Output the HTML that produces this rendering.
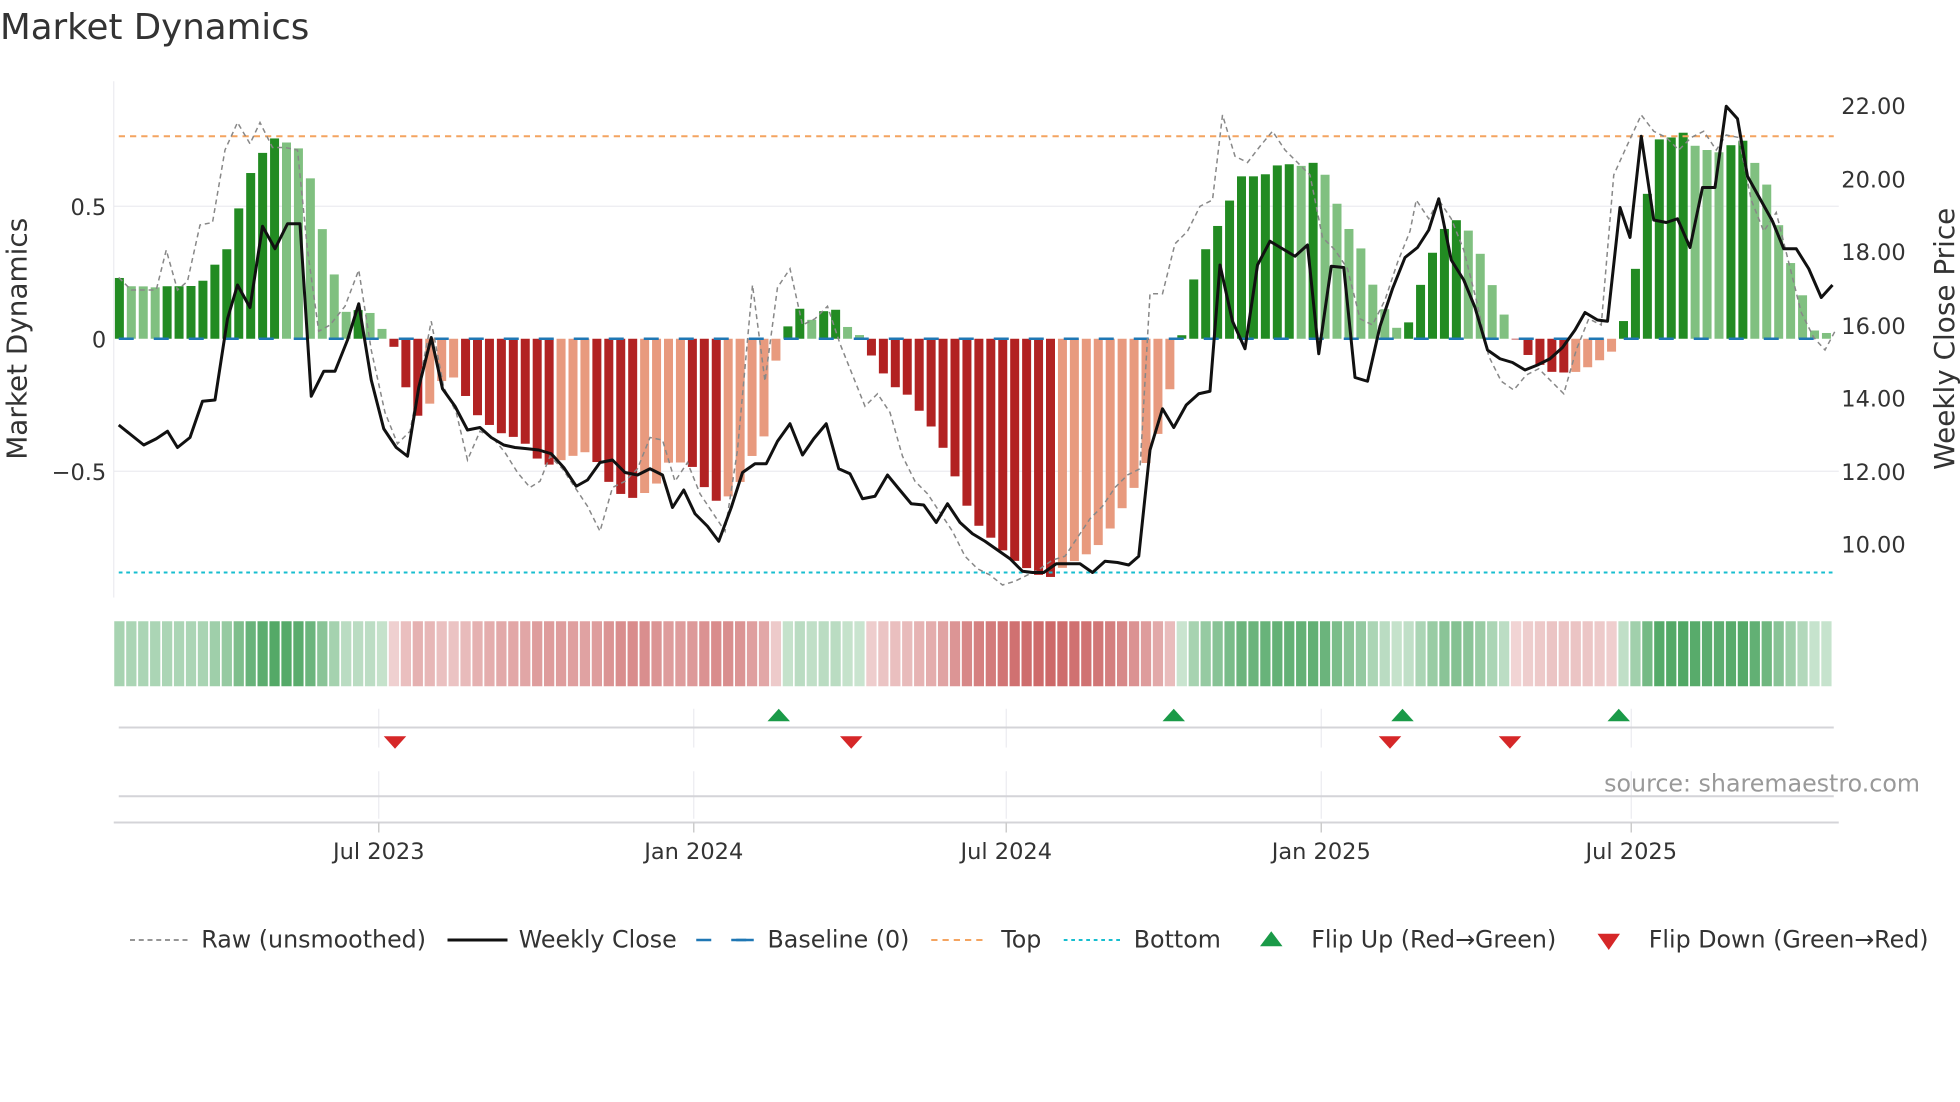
<!DOCTYPE html>
<html><head><meta charset="utf-8"><style>
html,body{margin:0;padding:0;background:#fff;}
svg{display:block;font-family:"DejaVu Sans","Liberation Sans",sans-serif;}
</style></head><body>
<svg id="s" width="1960" height="1102" viewBox="0 0 1568 881.6" xmlns="http://www.w3.org/2000/svg">
<rect width="1568" height="882" fill="#fff"/>
<text x="0" y="31" font-size="28.5" fill="#333">Market Dynamics</text>
<g stroke="#ebebf0" stroke-width="1">
<line x1="91" y1="165" x2="1471" y2="165"/><line x1="91" y1="377" x2="1471" y2="377"/>
<line x1="91" y1="65" x2="91" y2="478"/>
</g>
<g id="bars"></g>
<g id="heat"></g>
<line x1="95" y1="271" x2="1467" y2="271" stroke="#1f77b4" stroke-width="2" stroke-dasharray="12,16"/>
<line x1="95" y1="109" x2="1467" y2="109" stroke="#f4a460" stroke-width="1.6" stroke-dasharray="5,4"/>
<line x1="95" y1="458" x2="1467" y2="458" stroke="#17becf" stroke-width="1.6" stroke-dasharray="3,3"/>
<polyline id="raw" fill="none" stroke="#888" stroke-width="1.2" stroke-dasharray="4,3"/>
<polyline id="close" fill="none" stroke="#111" stroke-width="2.4" stroke-linejoin="round"/>
<g font-size="18" fill="#333">
<text x="85" y="172" text-anchor="end">0.5</text>
<text x="85" y="278" text-anchor="end">0</text>
<text x="85" y="384" text-anchor="end">−0.5</text>
<text x="1473" y="91">22.00</text><text x="1473" y="150">20.00</text><text x="1473" y="208">18.00</text>
<text x="1473" y="267">16.00</text><text x="1473" y="325">14.00</text><text x="1473" y="384">12.00</text><text x="1473" y="442">10.00</text>
</g>
<text transform="translate(21,271) rotate(-90)" font-size="22.3" fill="#333" text-anchor="middle">Market Dynamics</text>
<text transform="translate(1563,271) rotate(-90)" font-size="22.3" fill="#333" text-anchor="middle">Weekly Close Price</text>
<g stroke="#ebebf0" stroke-width="1">
<line x1="303" y1="567" x2="303" y2="598"/><line x1="555" y1="567" x2="555" y2="598"/><line x1="805" y1="567" x2="805" y2="598"/><line x1="1057" y1="567" x2="1057" y2="598"/><line x1="1305" y1="567" x2="1305" y2="598"/>
<line x1="303" y1="617" x2="303" y2="655"/><line x1="555" y1="617" x2="555" y2="655"/><line x1="805" y1="617" x2="805" y2="655"/><line x1="1057" y1="617" x2="1057" y2="655"/><line x1="1305" y1="617" x2="1305" y2="655"/>
</g>
<line x1="95" y1="582" x2="1467" y2="582" stroke="#d4d4d8" stroke-width="1.6"/>
<line x1="95" y1="637" x2="1467" y2="637" stroke="#d4d4d8" stroke-width="1.6"/>
<line x1="91" y1="658" x2="1471" y2="658" stroke="#d4d4d8" stroke-width="1.6"/>
<g stroke="#ccc" stroke-width="1.2"><line x1="303" y1="658" x2="303" y2="666"/><line x1="555" y1="658" x2="555" y2="666"/><line x1="805" y1="658" x2="805" y2="666"/><line x1="1057" y1="658" x2="1057" y2="666"/><line x1="1305" y1="658" x2="1305" y2="666"/></g>
<g font-size="18" fill="#333" text-anchor="middle">
<text x="303" y="687">Jul 2023</text><text x="555" y="687">Jan 2024</text><text x="805" y="687">Jul 2024</text><text x="1057" y="687">Jan 2025</text><text x="1305" y="687">Jul 2025</text>
</g>
<g fill="#1a9a48">
<polygon points="614,577 632,577 623,567"/><polygon points="930,577 948,577 939,567"/><polygon points="1113,577 1131,577 1122,567"/><polygon points="1286,577 1304,577 1295,567"/>
</g>
<g fill="#d62728">
<polygon points="307,589 325,589 316,599"/><polygon points="672,589 690,589 681,599"/><polygon points="1103,589 1121,589 1112,599"/><polygon points="1199,589 1217,589 1208,599"/>
</g>
<text x="1536" y="633" font-size="19" fill="#999" text-anchor="end">source: sharemaestro.com</text>
<g font-size="19" fill="#333">
<line x1="104" y1="752" x2="150" y2="752" stroke="#888" stroke-width="1.4" stroke-dasharray="4,3"/><text x="161" y="758">Raw (unsmoothed)</text>
<line x1="358" y1="752" x2="406" y2="752" stroke="#111" stroke-width="2.4"/><text x="415" y="758">Weekly Close</text>
<line x1="557" y1="752" x2="603" y2="752" stroke="#1f77b4" stroke-width="2" stroke-dasharray="12,16"/><line x1="589" y1="752" x2="603" y2="752" stroke="#1f77b4" stroke-width="2"/><text x="614" y="758">Baseline (0)</text>
<line x1="745" y1="752" x2="790" y2="752" stroke="#f4a460" stroke-width="1.6" stroke-dasharray="5,4"/><text x="801" y="758">Top</text>
<line x1="851" y1="752" x2="896" y2="752" stroke="#17becf" stroke-width="1.6" stroke-dasharray="3,3"/><text x="907" y="758">Bottom</text>
<polygon points="1008,757 1026,757 1017,745" fill="#1a9a48"/><text x="1049" y="758">Flip Up (Red→Green)</text>
<polygon points="1278,747 1296,747 1287,760" fill="#d62728"/><text x="1319" y="758">Flip Down (Green→Red)</text>
</g>
</svg>
<script>
var NS="http://www.w3.org/2000/svg";
var by=[222,229,229,230,229,229,229,228,213,208,177,143,129,110,112,117,121,169,199,240,258,240,258,269,292,329,335,318,302,302,316,331,338,345,349,350,358,370,372,368,365,361,365,380,393,397,399,393,386,370,370,370,386,397,405,391,383,360,348,280,258,245,258,247,248,265,269,288,300,310,315,327,338,352,372,395,415,425,433,443,450,455,460,462,455,450,445,440,430,415,400,385,365,343,303,258,213,195,176,155,136,143,138,130,132,133,129,145,172,189,204,241,251,269,251,213,195,175,177,190,213,240,262,281,287,297,298,298,297,290,286,275,232,197,120,106,112,104,120,120,122,116,112,129,143,173,206,222,264,265,268];
var n=by.length;
var anc=[[0,95],[22,300],[23,312],[58,612],[59,622],[65,680],[66,690],[93,928],[94,938],[121,1198],[122,1208],[130,1285],[131,1295],[n-1,1466]];
var kx=[];
for(var i=0;i<n;i++){for(var j=1;j<anc.length;j++){if(i<=anc[j][0]){var a=anc[j-1],b=anc[j];kx.push(a[1]+(i-a[0])*(b[1]-a[1])/(b[0]-a[0]));break;}}}
function interp(x){if(x<=kx[0])return by[0];for(var i=1;i<n;i++){if(x<=kx[i]){var t=(x-kx[i-1])/(kx[i]-kx[i-1]);return by[i-1]+t*(by[i]-by[i-1]);}}return by[n-1];}
var g=document.getElementById("bars"),h=document.getElementById("heat");
var N=144,prev=null;
for(var i=0;i<N;i++){var cx=95.5+i*9.55;var y=interp(cx);var v=(271-y)/212;
 var c;if(v>=0){c=(prev===null||v>=prev)?"#228b22":"#80c080";}else{c=(prev===null||v<=prev)?"#b22222":"#e89a7e";}
 prev=v;
 var r=document.createElementNS(NS,"rect");r.setAttribute("x",cx-3.6);r.setAttribute("width",7.2);
 r.setAttribute("y",Math.min(y,271));r.setAttribute("height",Math.max(Math.abs(271-y),0.5));r.setAttribute("fill",c);g.appendChild(r);
 var q=document.createElementNS(NS,"rect");q.setAttribute("x",cx-4.1);q.setAttribute("width",8.2);q.setAttribute("y",497);q.setAttribute("height",52);
 var a;if(v>=0){a=0.25+0.6*Math.min(v/0.8,1);q.setAttribute("fill","rgba(46,150,70,"+a.toFixed(2)+")");}
 else{a=0.22+0.55*Math.min(-v/0.9,1);q.setAttribute("fill","rgba(190,60,60,"+a.toFixed(2)+")");}
 h.appendChild(q);}
var raw=[95,222,105,232,115,232,125,232,133,200,142,232,150,225,160,180,170,178,180,120,190,98,200,115,208,98,218,118,228,118,238,120,246,200,255,265,264,260,276,245,287,216,297,280,308,330,318,355,328,345,345,257,355,310,365,330,374,368,384,345,394,350,404,362,414,378,424,390,432,385,440,365,450,375,460,390,470,405,480,425,490,390,500,385,510,375,520,350,530,352,540,385,550,370,560,395,570,410,580,425,590,360,602,228,612,305,622,230,632,215,642,260,652,255,662,245,672,275,682,300,692,325,702,315,712,330,722,365,732,385,742,395,752,410,762,425,772,445,782,455,792,460,802,468,812,465,822,460,832,455,842,448,852,445,862,430,872,415,882,405,892,390,902,380,912,375,920,235,930,235,940,195,950,185,960,165,970,160,978,92,988,125,998,130,1008,117,1018,105,1028,120,1038,130,1048,140,1058,190,1068,200,1078,215,1088,255,1098,260,1108,240,1118,210,1128,185,1133,160,1143,175,1151,160,1161,175,1171,200,1181,240,1191,285,1201,305,1211,312,1221,300,1231,295,1241,305,1251,315,1261,280,1271,255,1281,260,1291,140,1300,120,1313,92,1323,105,1333,110,1343,120,1353,110,1363,105,1373,120,1381,108,1391,110,1401,160,1411,185,1421,170,1431,210,1441,250,1451,270,1460,280,1468,265];
var cl=[95,340,105,348,115,356,125,351,134,345,142,358,152,350,162,321,172,320,182,255,190,228,200,246,210,181,220,199,230,179,240,179,249,317,259,297,268,297,278,272,287,243,297,304,307,343,317,358,326,365,335,310,345,270,354,311,364,325,374,344,384,342,393,350,403,356,412,358,422,359,431,360,441,363,451,374,461,389,470,384,480,370,490,368,500,378,510,380,520,375,530,380,538,406,547,392,556,411,566,421,575,433,585,406,594,378,604,371,613,371,622,353,632,339,642,364,651,351,661,339,671,375,680,379,690,399,700,397,710,380,719,391,729,403,739,404,749,418,758,403,768,418,778,427,788,433,798,440,808,447,818,457,826,458,835,458,845,451,855,451,864,451,874,458,884,449,894,450,903,452,911,445,920,360,930,327,939,342,949,324,959,315,968,313,976,212,986,257,996,279,1006,212,1016,193,1026,199,1036,205,1046,196,1055,283,1065,213,1075,214,1084,302,1094,305,1104,261,1114,231,1124,206,1134,198,1143,184,1151,159,1161,208,1171,224,1180,246,1190,280,1200,287,1210,290,1220,296,1230,292,1240,287,1250,278,1260,264,1268,250,1278,256,1286,257,1296,166,1304,190,1313,109,1323,176,1333,178,1342,175,1352,198,1362,150,1372,150,1381,85,1390,95,1398,141,1408,159,1418,177,1427,199,1437,199,1447,215,1457,238,1466,228];
function pts(a){var s=[];for(var i=0;i<a.length;i+=2)s.push(a[i]+","+a[i+1]);return s.join(" ");}
document.getElementById("raw").setAttribute("points",pts(raw));
document.getElementById("close").setAttribute("points",pts(cl));
</script>
</body></html>
